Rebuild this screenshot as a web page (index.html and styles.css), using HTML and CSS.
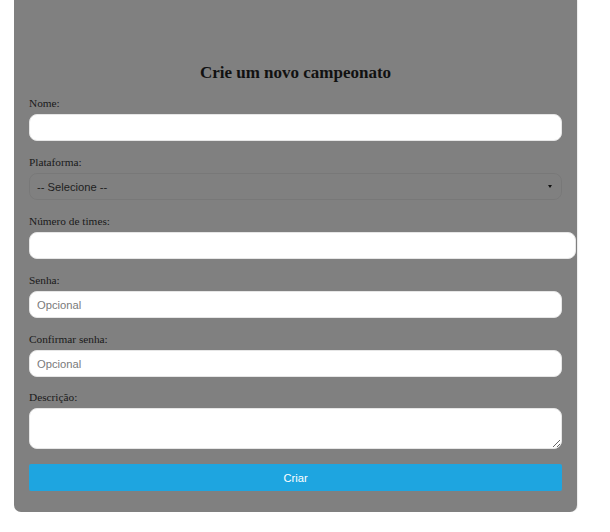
FILE: index.html
```html
<!DOCTYPE html>
<html lang="pt-BR">
<head>
<meta charset="utf-8">
<title>Criar campeonato</title>
<link rel="stylesheet" href="styles.css">
</head>
<body>
<div class="page">
  <form class="card">
    <h2 class="title">Crie um novo campeonato</h2>
    <div class="field">
      <label class="label" for="nome">Nome:</label>
      <input class="control" id="nome" type="text">
    </div>
    <div class="field">
      <label class="label" for="plat">Plataforma:</label>
      <div class="select-wrap">
        <select class="control select" id="plat">
          <option>-- Selecione --</option>
        </select>
      </div>
    </div>
    <div class="field">
      <label class="label" for="num">Número de times:</label>
      <input class="control control-wide" id="num" type="number">
    </div>
    <div class="field">
      <label class="label" for="senha">Senha:</label>
      <input class="control" id="senha" type="password" placeholder="Opcional">
    </div>
    <div class="field field-tight">
      <label class="label" for="conf">Confirmar senha:</label>
      <input class="control" id="conf" type="password" placeholder="Opcional">
    </div>
    <div class="field field-last">
      <label class="label" for="desc">Descrição:</label>
      <textarea class="control textarea" id="desc"></textarea>
    </div>
    <button class="submit" type="button">Criar</button>
  </form>
</div>
</body>
</html>
```

FILE: styles.css
```css
html, body {
  margin: 0;
  padding: 0;
  background: #ffffff;
}

.page {
  padding-left: 14px;
  width: 563px;
}

.card {
  background: #808080;
  border-radius: 0 0 7px 7px;
  padding: 63px 15px 21px;
  box-shadow: 1px 0 1px rgba(0, 0, 0, 0.08);
  font-family: "Liberation Serif", "Times New Roman", serif;
}

.title {
  margin: 0 0 14px;
  font-size: 17px;
  line-height: 19px;
  font-weight: bold;
  text-align: center;
  color: #111111;
}

.field {
  margin-bottom: 14px;
}

.field-tight {
  margin-bottom: 13px;
}

.field-last {
  margin-bottom: 15px;
}

.label {
  display: block;
  font-size: 11.3px;
  line-height: 14px;
  margin-bottom: 4px;
  color: #1a1a1a;
}

.control {
  display: block;
  box-sizing: border-box;
  width: 100%;
  height: 27px;
  margin: 0;
  padding: 0 7px;
  border: 1px solid #e6e6e6;
  border-radius: 8px;
  background: #ffffff;
  font-family: "Liberation Sans", Arial, sans-serif;
  font-size: 11.2px;
  color: #222222;
  outline: none;
}

.control::placeholder {
  color: #7a7a7a;
}

.control-wide {
  box-sizing: content-box;
  width: 100%;
  height: 25px;
  padding: 0 6px;
}

.select-wrap {
  position: relative;
}

.select-wrap::after {
  content: "";
  position: absolute;
  right: 10px;
  top: 12px;
  border-left: 2px solid transparent;
  border-right: 2px solid transparent;
  border-top: 3px solid #111111;
  pointer-events: none;
}

.select {
  -webkit-appearance: none;
  appearance: none;
  background: transparent;
  border: 1px solid rgba(0, 0, 0, 0.06);
  color: #1e1e1e;
  padding-left: 7px;
}

.textarea {
  height: 41px;
  resize: vertical;
  padding: 4px 7px;
}

.submit {
  display: block;
  width: 100%;
  height: 27px;
  border: none;
  border-radius: 2px;
  background: #1ea5e0;
  color: #ffffff;
  font-family: "Liberation Sans", Arial, sans-serif;
  font-size: 11.2px;
  cursor: pointer;
}
```
